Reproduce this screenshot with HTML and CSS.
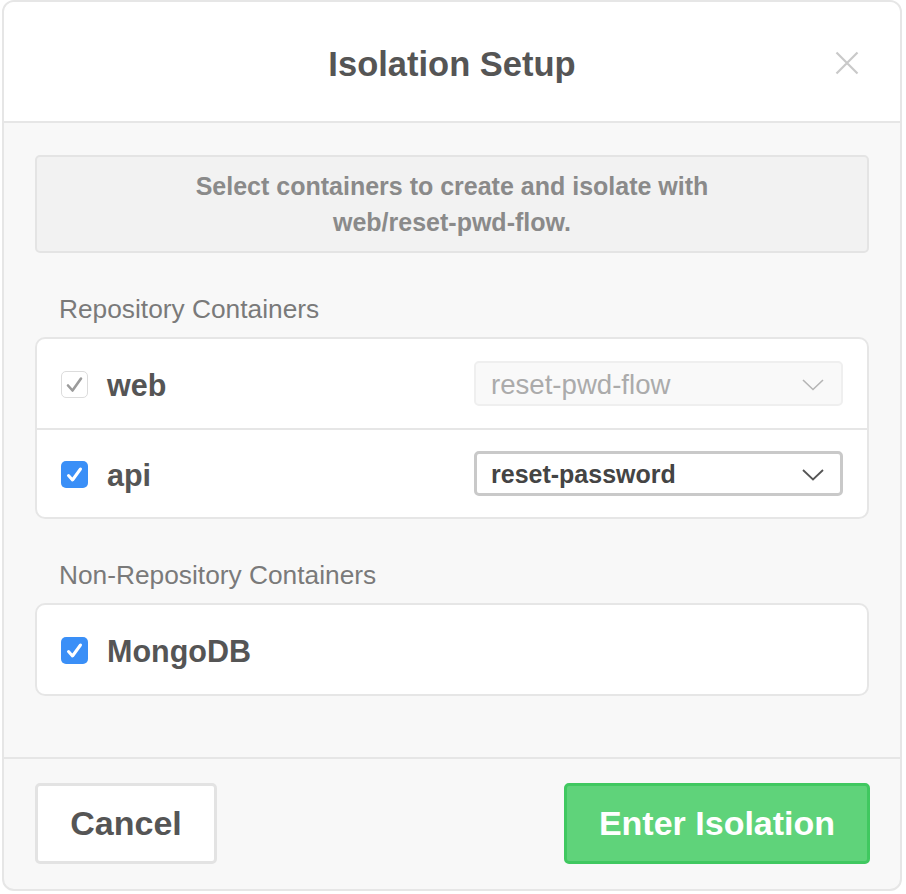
FILE: index.html
```html
<!DOCTYPE html>
<html>
<head>
<meta charset="utf-8">
<link rel="stylesheet" href="styles.css">
</head>
<body>
<div class="modal">
  <div class="modal-header">
    <h1 class="title">Isolation Setup</h1>
    <button class="close" aria-label="Close">
      <svg width="24" height="24" viewBox="0 0 24 24"><path d="M1.5 1.5 L22.5 22.5 M22.5 1.5 L1.5 22.5" stroke="#c9c9c9" stroke-width="2.2" fill="none"/></svg>
    </button>
  </div>
  <div class="modal-body">
    <div class="info">Select containers to create and isolate with<br>web/reset-pwd-flow.</div>

    <div class="section-label">Repository Containers</div>
    <div class="list">
      <div class="row">
        <span class="check disabled"><svg width="27" height="27" viewBox="0 0 27 27"><path d="M7 14.5 L11.5 19.5 L20 7.5" stroke="#9b9b9b" stroke-width="2.6" fill="none" stroke-linecap="round" stroke-linejoin="round"/></svg></span>
        <span class="name">web</span>
        <div class="select disabled"><span>reset-pwd-flow</span>
          <svg width="22" height="12" viewBox="0 0 22 12"><path d="M1 1 L11 10.5 L21 1" stroke="#b5b5b5" stroke-width="1.6" fill="none"/></svg>
        </div>
      </div>
      <div class="row">
        <span class="check on"><svg width="27" height="27" viewBox="0 0 27 27"><path d="M7.5 14.5 L11.5 19 L19.5 8" stroke="#fff" stroke-width="3" fill="none" stroke-linecap="round" stroke-linejoin="round"/></svg></span>
        <span class="name">api</span>
        <div class="select"><span>reset-password</span>
          <svg width="22" height="12" viewBox="0 0 22 12"><path d="M1 1 L11 10.5 L21 1" stroke="#555" stroke-width="1.8" fill="none"/></svg>
        </div>
      </div>
    </div>

    <div class="section-label">Non-Repository Containers</div>
    <div class="list">
      <div class="row">
        <span class="check on"><svg width="27" height="27" viewBox="0 0 27 27"><path d="M7.5 14.5 L11.5 19 L19.5 8" stroke="#fff" stroke-width="3" fill="none" stroke-linecap="round" stroke-linejoin="round"/></svg></span>
        <span class="name">MongoDB</span>
      </div>
    </div>
  </div>
  <div class="modal-footer">
    <button class="btn btn-cancel">Cancel</button>
    <button class="btn btn-primary">Enter Isolation</button>
  </div>
</div>
</body>
</html>
```
FILE: styles.css
```css
* { box-sizing: border-box; }
html, body { margin: 0; padding: 0; background: #ffffff; }
body {
  font-family: "Liberation Sans", Arial, Helvetica, sans-serif;
  color: #555;
}
.modal {
  width: 900px;
  margin: 0 0 0 2px;
  height: 891px;
  border: 2px solid #e6e6e6;
  border-radius: 12px;
  background: #f8f8f8;
  display: flex;
  flex-direction: column;
  overflow: hidden;
}
.modal-header {
  position: relative;
  background: #fff;
  height: 121px;
  border-bottom: 2px solid #e6e6e6;
  padding-top: 42px;
  flex: none;
}
.title {
  margin: 0;
  text-align: center;
  font-size: 34.5px;
  line-height: 40px;
  font-weight: bold;
  color: #555;
}
.close {
  position: absolute;
  top: 49px;
  right: 41px;
  width: 24px;
  height: 24px;
  padding: 0;
  border: 0;
  background: none;
  display: block;
}
.close svg { display: block; }
.modal-body {
  padding: 32px 31px 0 31px;
  flex: 1;
}
.info {
  background: #f2f2f2;
  border: 2px solid #e4e4e4;
  border-radius: 5px;
  padding: 11px 10px;
  text-align: center;
  font-size: 25px;
  line-height: 36px;
  font-weight: bold;
  color: #8a8a8a;
}
.section-label {
  margin: 41px 0 13px 24px;
  font-size: 26.3px;
  line-height: 30px;
  color: #7a7a7a;
}
.list {
  background: #fff;
  border: 2px solid #e6e6e6;
  border-radius: 10px;
}
.list:first-of-type { margin-top: 0; }
.row {
  display: flex;
  align-items: center;
  height: 89px;
  padding: 0 24px;
}
.row + .row {
  border-top: 2px solid #e6e6e6;
  height: 89px;
}
.check {
  width: 27px;
  height: 27px;
  border-radius: 5px;
  flex: none;
  display: block;
  margin-top: 2px;
}
.check svg { display: block; }
.check.disabled {
  background: #fff;
  border: 1px solid #dcdcdc;
}
.check.disabled svg { margin: -1px; }
.check.on { background: #3a8ff7; }
.name {
  margin-left: 19px;
  font-size: 30.5px;
  font-weight: bold;
  color: #555;
  flex: 1;
  padding-top: 3px;
}
.select {
  width: 369px;
  height: 45px;
  border-radius: 5px;
  display: flex;
  align-items: center;
  justify-content: space-between;
  padding: 2px 16px 0 14px;
  background: #fff;
  border: 3px solid #c9c9c9;
  font-size: 25px;
  font-weight: bold;
  color: #444;
}
.select.disabled {
  background: #f9f9f9;
  border: 2px solid #efefef;
  padding: 2px 17px 0 15px;
  font-size: 27.6px;
  font-weight: normal;
  color: #ababab;
}
.select svg { display: block; }
.modal-footer {
  flex: none;
  border-top: 2px solid #e6e6e6;
  padding: 24px 30px 25px 31px;
  display: flex;
  justify-content: space-between;
  align-items: center;
}
.btn {
  height: 81px;
  font-family: "Liberation Sans", Arial, Helvetica, sans-serif;
  font-size: 34px;
  font-weight: bold;
  border-radius: 5px;
  padding: 0;
  cursor: pointer;
}
.btn-cancel {
  width: 182px;
  background: #fff;
  border: 3px solid #e3e3e3;
  color: #555;
}
.btn-primary {
  width: 306px;
  background: #5fd37a;
  border: 3px solid #40c860;
  color: #fff;
}
```
